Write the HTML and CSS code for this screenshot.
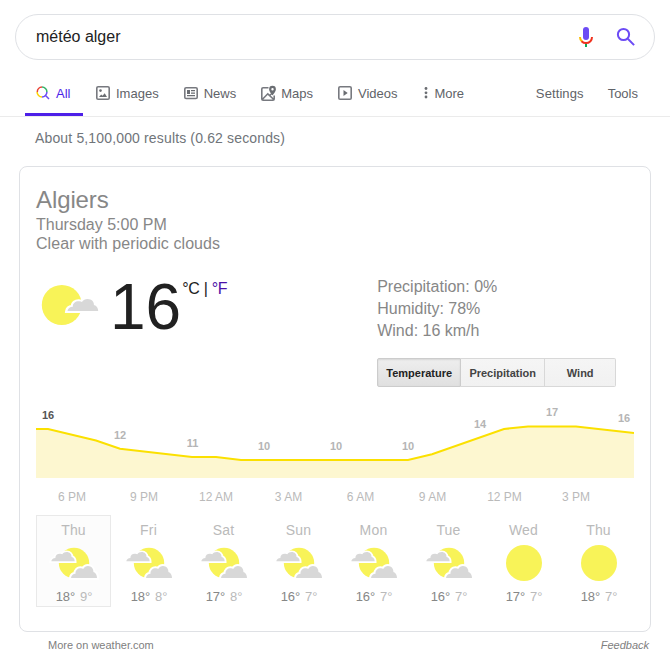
FILE: index.html
```html
<!DOCTYPE html>
<html lang="en">
<head>
<meta charset="utf-8">
<title>météo alger</title>
<link rel="stylesheet" href="styles.css">
</head>
<body>
<svg class="defs" width="0" height="0">
  <defs>
    <path id="cloud" d="M0 12C.3 9.4 2 7.8 4.5 7.7C4.4 4 7 2 10 2.3C11 2.3 11.7 2.6 12.2 3C13.3 .9 15 0 17 0C20.5 0 22.6 2.8 22.4 6C24.8 6.8 26 9 26 12Z"/>
    <symbol id="partly" viewBox="0 0 50 40">
      <circle class="sun" cx="25" cy="20" r="15.2"/>
      <use href="#cloud" class="halo" transform="translate(2.3 9) scale(.9 .78)"/>
      <use href="#cloud" class="cloud" transform="translate(2.3 9) scale(.9 .78)"/>
      <use href="#cloud" class="halo" transform="translate(22 23)"/>
      <use href="#cloud" class="cloud" transform="translate(22 23)"/>
    </symbol>
    <symbol id="sunny" viewBox="0 0 50 40"><circle class="sun" cx="25" cy="20" r="18"/></symbol>
  </defs>
</svg>

<header>
  <form class="search">
    <span class="query">météo alger</span>
    <svg class="mic" width="24" height="24" viewBox="0 0 24 24" fill="none">
      <rect x="9" y="2" width="6" height="13" rx="3" fill="#6c4bf5"/>
      <path d="M11 17h2v5h-2z" fill="#0fa958"/>
      <path d="M6 12c0 2 .8 3.600 2 4.600" stroke="#fbbc04" stroke-width="2"/>
      <path d="M7.600 16.200C10 18.700 14 18.700 16.400 16.200C17.500 15 18 13.500 18 12" stroke="#f0321e" stroke-width="2"/>
    </svg>
    <svg width="24" height="24" viewBox="0 0 24 24" fill="none" stroke="#6c4bf5" stroke-width="2">
      <circle cx="9.500" cy="9.500" r="5.600"/><path d="M13.800 13.800l6.300 6.300"/>
    </svg>
  </form>

  <nav class="tabs">
    <a class="tab active"><svg width="14" height="14" viewBox="0 0 14 14" fill="none" stroke-width="1.500">
      <path d="M1.300 6A4.900 4.900 0 0 1 6 1" stroke="#ea4335"/><path d="M6 1A4.900 4.900 0 0 1 10.900 6" stroke="#34b36a"/>
      <path d="M10.900 6A4.900 4.900 0 0 1 6 10.900" stroke="#6c4bf5"/><path d="M6 10.900A4.900 4.900 0 0 1 1.100 6" stroke="#fbd204"/>
      <path d="M9.300 9.300l3.700 3.700" stroke="#6c4bf5"/></svg>All</a>
    <a class="tab"><svg width="14" height="14" viewBox="0 0 14 14">
      <rect class="line" x=".800" y=".800" width="12.400" height="12.400" rx="1.300"/><circle cx="4.500" cy="4.600" r="1.300"/><path d="M3 11l2.200-2.600 1.300 1.300L8.700 7.200 11 11z"/></svg>Images</a>
    <a class="tab"><svg width="14" height="14" viewBox="0 0 14 14">
      <rect class="line" x=".800" y="1.800" width="12.400" height="10.700" rx="1.300"/><path d="M3 4h3v4H3zM7 4h4v1.200H7zM7 6.500h4v1.200H7zM3 9h8v1.300H3z"/></svg>News</a>
    <a class="tab"><svg class="map" width="16" height="16" viewBox="0 0 16 16">
      <path class="line" d="M7.500 2.800H2.100Q.800 2.800 .800 4.100V13.900Q.800 15.200 2.100 15.200H11.900Q13.200 15.200 13.200 13.900V10.500M1.500 14.300L6.800 8.800l6 5.700M8.500 10.500L11 8.500"/><path fill-rule="evenodd" d="M11.500 .800A3.400 3.400 0 0 1 14.900 4.200C14.900 6.500 11.500 10.300 11.500 10.300S8.100 6.500 8.100 4.200A3.400 3.400 0 0 1 11.500 .800zM11.500 3a1.200 1.200 0 1 0 0 2.400 1.200 1.200 0 0 0 0-2.400z"/></svg>Maps</a>
    <a class="tab"><svg width="14" height="14" viewBox="0 0 14 14">
      <rect class="line" x=".800" y=".800" width="12.400" height="12.400" rx="1.300"/><path d="M5.500 4v6l4.200-3z"/></svg>Videos</a>
    <a class="tab more"><svg width="4" height="14" viewBox="0 0 4 14"><circle cx="2" cy="2.500" r="1.400"/><circle cx="2" cy="6.800" r="1.400"/><circle cx="2" cy="11" r="1.400"/></svg>More</a>
    <a class="tab settings">Settings</a>
    <a class="tab tools">Tools</a>
  </nav>
</header>

<p class="stats">About 5,100,000 results (0.62 seconds)</p>

<main class="card">
  <h1>Algiers</h1>
  <p class="sub">Thursday 5:00 PM</p>
  <p class="sub wide">Clear with periodic clouds</p>

  <section class="now">
    <svg class="now-icon" width="64" height="64" viewBox="0 0 64 64">
      <circle class="sun" cx="25.800" cy="32" r="20"/>
      <use href="#cloud" class="halo" transform="translate(31.500 26) scale(1.180 1)"/>
      <use href="#cloud" class="cloud" transform="translate(31.500 26) scale(1.180 1)"/>
    </svg>
    <span class="temp">16</span>
    <span class="units">°C | <a>°F</a></span>
    <div class="details">
      <div>Precipitation: 0%</div>
      <div>Humidity: 78%</div>
      <div>Wind: 16 km/h</div>
      <div class="buttons">
        <button class="selected">Temperature</button><button>Precipitation</button><button>Wind</button>
      </div>
    </div>
  </section>

  <svg class="chart" width="598" height="104" viewBox="0 0 598 104">
    <path fill="#fdf7d0" d="M0 28.500H12L60 40 84 48.500 156 57H180L205 60H372L396 54 468 28.500 492 26H540L598 33V78H0z"/>
    <path fill="none" stroke="#fbe000" stroke-width="2" d="M0 29H12L60 40.500 84 48.700 156 57H180L205 60H372L396 54.200 468 29 492 26.500H540L598 33"/>
    <g class="values">
      <text class="current" x="12" y="19">16</text><text x="84" y="39">12</text><text x="156.500" y="47">11</text>
      <text x="228" y="50">10</text><text x="300" y="50">10</text><text x="372" y="50">10</text>
      <text x="444" y="28">14</text><text x="516" y="16">17</text><text x="588" y="22">16</text>
    </g>
    <g class="hours">
      <text x="36" y="101">6 PM</text><text x="108" y="101">9 PM</text><text x="180" y="101">12 AM</text><text x="252.500" y="101">3 AM</text>
      <text x="324.500" y="101">6 AM</text><text x="396.500" y="101">9 AM</text><text x="468.500" y="101">12 PM</text><text x="540" y="101">3 PM</text>
    </g>
  </svg>

  <section class="days">
    <div class="day today">Thu<svg><use href="#partly"/></svg><p><b>18°</b> 9°</p></div>
    <div class="day">Fri<svg><use href="#partly"/></svg><p><b>18°</b> 8°</p></div>
    <div class="day">Sat<svg><use href="#partly"/></svg><p><b>17°</b> 8°</p></div>
    <div class="day">Sun<svg><use href="#partly"/></svg><p><b>16°</b> 7°</p></div>
    <div class="day">Mon<svg><use href="#partly"/></svg><p><b>16°</b> 7°</p></div>
    <div class="day">Tue<svg><use href="#partly"/></svg><p><b>16°</b> 7°</p></div>
    <div class="day">Wed<svg><use href="#sunny"/></svg><p><b>17°</b> 7°</p></div>
    <div class="day">Thu<svg><use href="#sunny"/></svg><p><b>18°</b> 7°</p></div>
  </section>
</main>

<footer><span>More on weather.com</span><em>Feedback</em></footer>
</body>
</html>
```
FILE: styles.css
```css
* { box-sizing: border-box; }
body { margin: 0; background: #fff; font-family: "Liberation Sans", Arial, sans-serif; overflow: hidden; }
p, h1 { margin: 0; font-weight: normal; }
svg { display: block; flex: none; }
.defs { position: absolute; }
.sun { fill: #f8f358; }
.cloud { fill: #d8d8d8; }
.halo { fill: #fff; stroke: #fff; stroke-width: 4; }

.search { display: flex; align-items: center; height: 46px; margin: 14px 15px 0; padding: 0 16px 0 20px; border: 1px solid #dfe1e5; border-radius: 23px; }
.query { flex: 1; font-size: 16px; color: #222; }
.mic { margin-right: 16px; }

.tabs { display: flex; height: 57px; padding: 11px 0 0 25px; border-bottom: 1px solid #ebebeb; font-size: 13px; color: #5f6368; }
.tab { display: flex; align-items: center; height: 45px; padding: 0 12px 0 13px; }
.tab svg { width: 14px; margin: -1px 6px 0 0; overflow: visible; fill: #6a6d72; }
.tab .map { width: 16px; margin: -2px 4px 0 0; }
.tab .line { fill: none; stroke: #77797f; stroke-width: 1.6; }
.tab.active { width: 58px; padding: 3px 0 0 11px; color: #4d1fe8; border-bottom: 3px solid #4d1fe8; }
.tab.active svg { fill: none; }
.tab.more { padding-left: 15px; }
.tab.more svg { width: 4px; }
.settings { margin-left: auto; padding: 0 12px; letter-spacing: .1px; }
.tools { padding: 0 32px 0 12px; }

.stats { height: 49px; padding: 13px 0 0 35px; font-size: 14px; line-height: 17px; color: #70757a; letter-spacing: .15px; }

.card { width: 632px; height: 466px; margin-left: 19px; padding: 18px 16px 0; border: 1px solid #dfe1e5; border-radius: 8px; color: #878787; }
h1 { height: 30px; font-size: 24px; line-height: 29px; letter-spacing: -.1px; }
.sub { font-size: 16px; line-height: 19px; }
.wide { letter-spacing: .07px; }

.now { display: flex; height: 147px; padding-top: 20px; }
.now-icon { margin: 0 10px 0 0; }
.temp { height: 72px; margin-top: -2px; font-size: 64px; line-height: 72px; color: #212121; }
.units { margin: 7px 0 0 1px; width: 195px; font-size: 16px; line-height: 18px; letter-spacing: -.3px; color: #212121; }
.units a { color: #4b11a8; }
.details { font-size: 16px; line-height: 22px; padding-top: 3px; }
.buttons { display: flex; width: 239px; height: 29px; margin-top: 16px; }
.buttons button { flex: 1 0 71px; padding: 0; border: 1px solid #d8d8d8; border-left-width: 0; background: linear-gradient(#f5f5f5, #f1f1f1); color: #444; font: bold 11px "Liberation Sans", sans-serif; }
.buttons button:nth-child(-n+2) { flex: 0 0 84px; }
.buttons button:last-child { border-radius: 0 2px 2px 0; }
.buttons .selected { border: 1px solid #ccc; border-radius: 2px 0 0 2px; background: linear-gradient(#eee, #e0e0e0); box-shadow: inset 0 1px 2px rgba(0,0,0,.1); color: #222; }

.values { font-size: 11px; font-weight: bold; text-anchor: middle; fill: #b5b5b5; }
.values .current { fill: #555; }
.hours { font-size: 12px; text-anchor: middle; fill: #bababa; }

.days { display: flex; margin-top: 11px; }
.day { flex: none; width: 75px; height: 92px; padding: 6px 0 0; text-align: center; font-size: 14px; line-height: 16px; letter-spacing: .2px; color: #bababa; border: 1px solid transparent; }
.today { background: #fcfcfc; border-color: #e9e9e9; }
.day svg { width: 50px; height: 40px; margin: 5px auto 6px 12px; }
.day p { font-size: 13px; line-height: 16px; letter-spacing: 0; padding-left: 1px; }
.day b { font-weight: normal; color: #878787; margin-right: 1px; }

footer { display: flex; justify-content: space-between; padding: 6px 21px 0 48px; font-size: 11px; line-height: 14px; color: #808080; }
```
